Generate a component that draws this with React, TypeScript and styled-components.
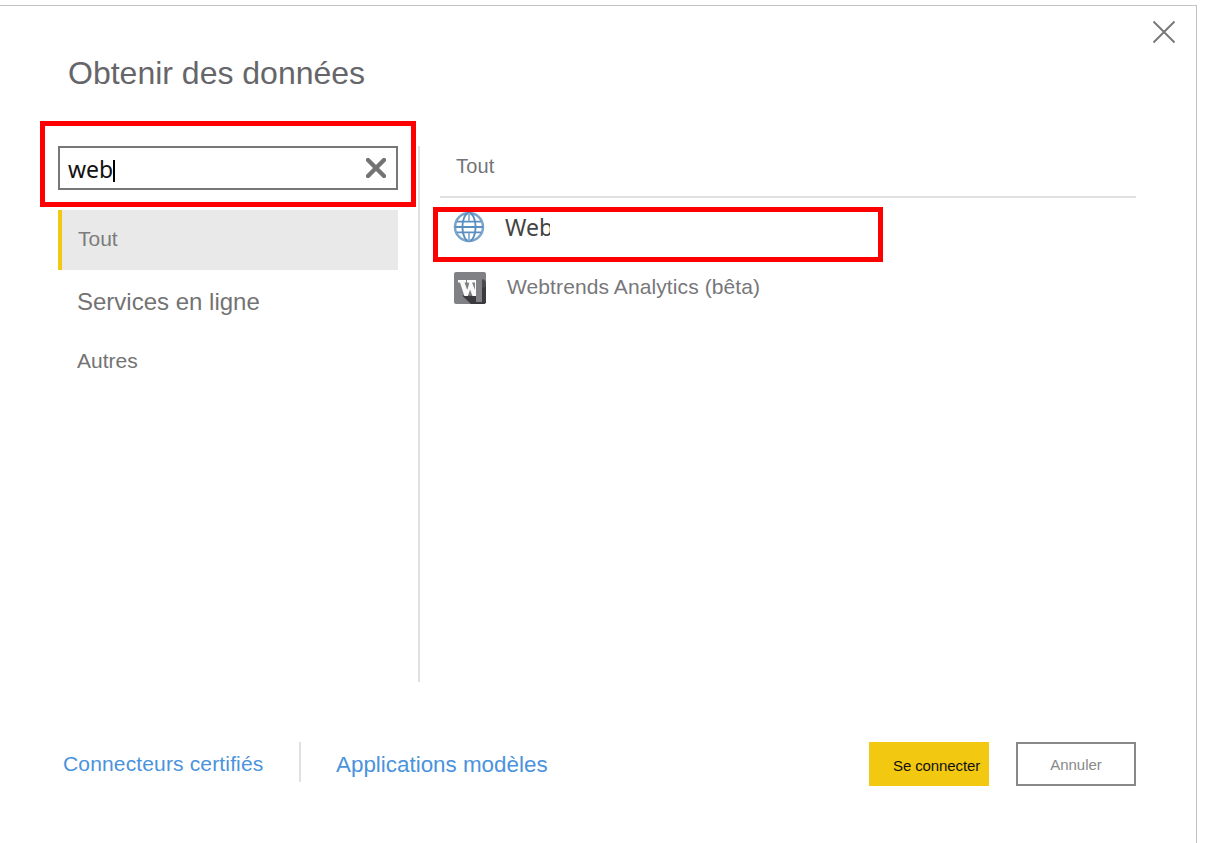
import React from "react";
import styled, { createGlobalStyle } from "styled-components";

const GlobalStyle = createGlobalStyle`
  * { box-sizing: border-box; }
  body { margin: 0; background: #fff; overflow: hidden; }
`;

const Dialog = styled.div`
  position: relative;
  width: 1197px;
  height: 838px;
  margin-top: 5px;
  border-top: 1px solid #c3c3c3;
  border-right: 1px solid #c3c3c3;
  background: #fff;
  display: flex;
  flex-direction: column;
  font-family: "Liberation Sans", Arial, sans-serif;
  color: #737373;
`;

const TopBar = styled.header`
  display: flex;
  justify-content: space-between;
  align-items: flex-start;
  height: 140px;
  padding: 14px 20px 0 68px;
`;

const Title = styled.h1`
  margin: 33px 0 0;
  font-size: 32px;
  line-height: 40px;
  font-weight: 400;
  color: #66666a;
`;

const IconButton = styled.button`
  display: flex;
  padding: 0;
  border: 0;
  background: none;
`;

const Columns = styled.main`
  display: flex;
  height: 536px;
  padding-left: 58px;
`;

const Sidebar = styled.nav`
  width: 340px;
`;

const SearchField = styled.div`
  position: relative;
  display: flex;
  align-items: center;
  justify-content: space-between;
  height: 44px;
  padding: 0 10px 0 8px;
  border: 2px solid #777;
`;

const Query = styled.span`
  display: flex;
  align-items: center;
  padding-top: 2px;
  font: 400 23px/30px "Noto Sans", sans-serif;
  color: #111;
`;

const Caret = styled.i`
  width: 2px;
  height: 22px;
  margin: 4px 0 0 -0.5px;
  background: #000;
`;

const Categories = styled.ul`
  list-style: none;
  margin: 20px 0 0;
  padding: 0;
`;

const Category = styled.li<{ $active?: boolean; $size?: number; $drop?: number }>`
  height: 60px;
  padding: ${(p) => p.$drop ?? 0}px 0 0 ${(p) => (p.$active ? 16 : 19)}px;
  border-left: ${(p) => (p.$active ? "4px solid #f2c811" : "0")};
  background: ${(p) => (p.$active ? "#e9e9e9" : "transparent")};
  font-size: ${(p) => p.$size ?? 21}px;
  line-height: 58px;
  color: ${(p) => (p.$active ? "#7c7c7c" : "#737373")};
`;

const Divider = styled.div<{ $height: number; $left: number; $right: number }>`
  width: 2px;
  height: ${(p) => p.$height}px;
  margin: 0 ${(p) => p.$right}px 0 ${(p) => p.$left}px;
  background: #e0e0e0;
`;

const Results = styled.section`
  width: 696px;
`;

const ResultsHeader = styled.h2`
  height: 52px;
  margin: 0;
  padding-left: 16px;
  border-bottom: 2px solid #e0e0e0;
  font-size: 20px;
  font-weight: 400;
  line-height: 40px;
  letter-spacing: 0.2px;
  color: #737378;
`;

const ResultRow = styled.div<{ $height: number; $indent: number }>`
  display: flex;
  align-items: center;
  height: ${(p) => p.$height}px;
  padding-left: ${(p) => p.$indent}px;
`;

const WebLabel = styled.span`
  width: 45px;
  margin: 0 0 0 20px;
  overflow: hidden;
  font: 400 23px/30px "Noto Sans", sans-serif;
  color: #444;
`;

const ConnectorLabel = styled.span`
  margin: 0 0 2px 21px;
  font-size: 21px;
  line-height: 30px;
  letter-spacing: 0.1px;
  color: #77777b;
`;

const Highlight = styled.div<{ $x: number; $y: number; $w: number; $h: number }>`
  position: absolute;
  left: ${(p) => p.$x}px;
  top: ${(p) => p.$y}px;
  width: ${(p) => p.$w}px;
  height: ${(p) => p.$h}px;
  border: 5px solid #f00;
  pointer-events: none;
`;

const Footer = styled.footer`
  display: flex;
  height: 44px;
  margin-top: 60px;
  padding: 0 60px 0 63px;
`;

const FooterLink = styled.a<{ $size: number; $spacing: number; $line: number }>`
  font-size: ${(p) => p.$size}px;
  line-height: ${(p) => p.$line}px;
  letter-spacing: ${(p) => p.$spacing}px;
  white-space: nowrap;
  color: #4a93dc;
`;

const LinkSlot = styled.div<{ $width: number }>`
  width: ${(p) => p.$width}px;
`;

const Actions = styled.div`
  display: flex;
  gap: 27px;
  margin-left: auto;
`;

const ActionButton = styled.button<{ $primary?: boolean }>`
  width: 120px;
  height: 44px;
  padding: ${(p) => (p.$primary ? "3px 0 0 24px" : "2px 0 0")};
  border: ${(p) => (p.$primary ? "0" : "2px solid #888")};
  background: ${(p) => (p.$primary ? "#f2c811" : "#fff")};
  font: 400 15px/20px "Liberation Sans", Arial, sans-serif;
  letter-spacing: ${(p) => (p.$primary ? -0.1 : 0)}px;
  text-align: ${(p) => (p.$primary ? "left" : "center")};
  white-space: nowrap;
  color: ${(p) => (p.$primary ? "#111" : "#888")};
`;

const CloseIcon = () => (
  <svg width="24" height="24" viewBox="0 0 24 24" stroke="#777" strokeWidth="1.9">
    <path d="M1.5 1.5 22.5 22.5M22.5 1.5 1.5 22.5" />
  </svg>
);

const ClearIcon = () => (
  <svg width="20" height="20" viewBox="0 0 20 20" stroke="#737373" strokeWidth="4.3">
    <path d="M2 2 18 18M18 2 2 18" strokeLinecap="square" />
  </svg>
);

const GlobeIcon = () => (
  <svg width="32" height="32" viewBox="0 0 32 32" fill="none" stroke="#5b8fc0" strokeWidth="1.9">
    <circle cx="16" cy="16" r="14" stroke="#7ba4cd" strokeWidth="2.5" />
    <ellipse cx="16" cy="16" rx="6.6" ry="14" />
    <path d="M2 16h28M4 10.6h24M4 21.4h24" />
    <path d="M16 2v8M16 22v8" stroke="#8fb3d5" />
  </svg>
);

const WebtrendsIcon = () => (
  <svg width="32" height="32" viewBox="0 0 32 32">
    <rect width="32" height="32" rx="2" fill="#808184" />
    <path d="M8 23.5 17 32H30.5L32 30.5V10L28 7.5V30H22V24Z" fill="#3b3b3d" />
    <path d="M28 7.5h2l2 2.5v5l-4 1Z" fill="#4a4a4d" />
    <path
      d="M4 8h8v2.4h-1.5l2.7 7.6 2-6.200-.7-1.400H13V8h9v16h-3.500l-2.400-6.500-2.300 6.500h-3.400L6 10.400H4ZM18 10.400l3 7.600v-7.600Z"
      fill="#fafafa"
      fillRule="evenodd"
    />
  </svg>
);

export default function App() {
  return (
    <>
      <GlobalStyle />
      <Dialog>
        <TopBar>
          <Title>Obtenir des données</Title>
          <IconButton aria-label="Fermer">
            <CloseIcon />
          </IconButton>
        </TopBar>
        <Columns>
          <Sidebar>
            <SearchField>
              <Query>
                web
                <Caret />
              </Query>
              <IconButton aria-label="Effacer">
                <ClearIcon />
              </IconButton>
            </SearchField>
            <Categories>
              <Category $active>Tout</Category>
              <Category $size={24} $drop={3}>Services en ligne</Category>
              <Category $drop={2}>Autres</Category>
            </Categories>
          </Sidebar>
          <Divider $height={536} $left={20} $right={20} />
          <Results>
            <ResultsHeader>Tout</ResultsHeader>
            <ResultRow $height={58} $indent={13}>
              <GlobeIcon />
              <WebLabel>Web</WebLabel>
            </ResultRow>
            <ResultRow $height={64} $indent={14}>
              <WebtrendsIcon />
              <ConnectorLabel>Webtrends Analytics (bêta)</ConnectorLabel>
            </ResultRow>
          </Results>
        </Columns>
        <Footer>
          <LinkSlot $width={236}>
            <FooterLink $size={21} $spacing={0.15} $line={44}>Connecteurs certifiés</FooterLink>
          </LinkSlot>
          <Divider $height={40} $left={0} $right={35} />
          <FooterLink $size={22.4} $spacing={0} $line={46}>Applications modèles</FooterLink>
          <Actions>
            <ActionButton $primary>Se connecter</ActionButton>
            <ActionButton>Annuler</ActionButton>
          </Actions>
        </Footer>
        <Highlight $x={40} $y={115} $w={376} $h={86} />
        <Highlight $x={433} $y={201} $w={450} $h={55} />
      </Dialog>
    </>
  );
}
